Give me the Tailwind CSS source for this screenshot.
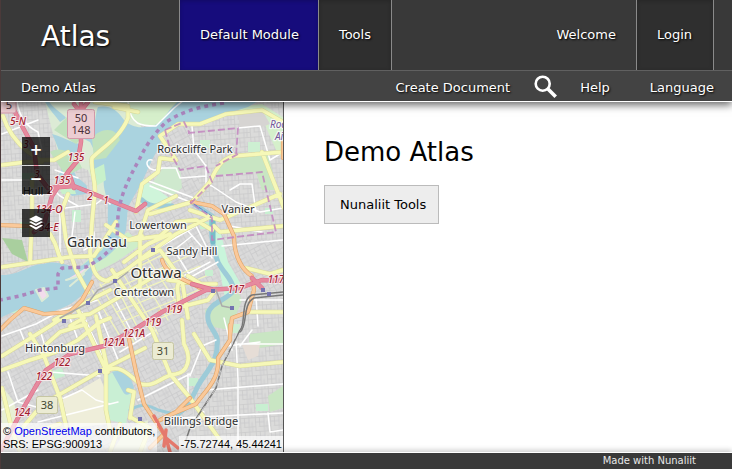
<!DOCTYPE html>
<html lang="en">
<head>
<meta charset="utf-8">
<title>Demo Atlas</title>
<script src="https://cdn.jsdelivr.net/npm/@tailwindcss/browser@4"></script>
</head>
<body class="flex h-screen flex-col overflow-hidden border-l border-[#4b3a3a] bg-white font-['DejaVu_Sans',sans-serif] text-[13px] text-black">
<header class="relative z-10 shrink-0 border-b border-white text-white shadow-[0_3px_8px_rgba(0,0,0,0.6)] [text-shadow:1px_1px_2px_#000]">
  <div class="flex h-[70px] items-stretch bg-[#393939]">
    <h1 class="flex w-[178px] items-center pt-1 pl-10 text-[28px]">Atlas</h1>
    <nav class="flex" aria-label="Modules">
      <a href="#" class="flex items-center border-l border-[#8a8a8a] bg-[#160c7c] pr-[19px] pl-5 inset-shadow-[0_1px_4px_rgba(0,0,0,0.2)]">Default Module</a>
      <a href="#" class="flex items-center border-x border-[#8a8a8a] bg-[#2f2f2f] px-5 inset-shadow-[0_1px_4px_rgba(0,0,0,0.2)]">Tools</a>
    </nav>
    <div class="ml-auto mr-[18px] flex">
      <span class="flex items-center px-5">Welcome</span>
      <a href="#" class="flex items-center border-x border-[#8a8a8a] bg-[#2f2f2f] pr-[21px] pl-5 inset-shadow-[0_1px_4px_rgba(0,0,0,0.2)]">Login</a>
    </div>
  </div>
  <div class="flex h-[31px] items-center border-t border-[#606060] bg-[#434343] pt-1 pr-[18px] pl-5">
    <a href="#">Demo Atlas</a>
    <a href="#" class="ml-auto">Create Document</a>
    <button type="button" aria-label="Search" class="-mt-[3px] ml-6">
      <svg class="block size-6" viewBox="0 0 24 24" fill="none" stroke="#fff"><circle cx="8.700" cy="8.700" r="7" stroke-width="2.600"/><path d="M13.700 13.700L21.700 21.700" stroke-width="3.600"/></svg>
    </button>
    <a href="#" class="ml-[22px]">Help</a>
    <a href="#" class="ml-10">Language</a>
  </div>
</header>
<main class="flex min-h-0 flex-1">
  <section class="relative w-[283px] shrink-0 overflow-hidden border-r border-[#555] bg-[#dadada]" aria-label="Map">
    <svg class="block size-full" viewBox="1 102 282 350" preserveAspectRatio="xMinYMin slice" fill="none" stroke-linejoin="round" stroke-linecap="round">
      <defs>
        <pattern id="streets" width="17" height="13" patternUnits="userSpaceOnUse" patternTransform="rotate(-28)"><rect width="17" height="13" fill="#dadada"/><path d="M0 .5H17M0 4.500H11M5 9H17M.5 0V13M5.500 0V9M11 0V13M14 4V13" stroke="#cacacc" stroke-width=".8"/></pattern>
        <pattern id="blocks" width="15" height="14" patternUnits="userSpaceOnUse" patternTransform="rotate(-4)"><rect width="15" height="14" fill="#dbdbda"/><path d="M0 .5H15M0 5H9M4 9.500H15M.5 0V14M4.500 0V9M9 0V14M12 5V14" stroke="#cacacc" stroke-width=".8"/></pattern>
      </defs>
      <rect x="0" y="100" width="290" height="360" fill="url(#streets)"/>
      <path d="M0 100H130V240L0 270ZM200 290H290V460H190Z" fill="url(#blocks)"/>
      <path d="M190 100H290V240H225L200 190Z" fill="url(#blocks)"/>

      <g fill="#c9e6c3">
        <path d="M45 102H128L142 128 120 190 100 200 88 170 60 160 52 130Z" fill="#dcebd5"/>
        <path d="M125 100H180L172 116 160 127 140 125 130 118Z" fill="#d6efcb"/>
        <path d="M232 108L262 104 284 118V160L276 150 262 118Z" fill="#d5efcb"/>
        <path d="M220 160L268 154 277 190 262 190 256 172 216 175Z"/>
        <path d="M163 168L180 166 182 188 172 196 150 186Z" fill="#cfe9ce"/>
        <path d="M142 178L172 200 168 212 138 204Z" fill="#cff5da"/>
        <path d="M212 235L220 230 228 262 242 286 225 298 218 262Z" fill="#c9f5db"/>
        <path d="M205 310L236 288 242 300 230 330 208 326Z"/>
        <path d="M100 248L128 232 142 244 116 262 96 272 62 284Z" fill="#cfeec9"/>
        <path d="M2 238L22 240 28 262 12 254Z" fill="#a9cf9e"/>
        <path d="M62 400L100 378 110 400 108 424 70 428Z" fill="#efeeda"/>
        <path d="M104 378L118 368 132 392 126 424 108 420Z" fill="#c9efd4"/>
        <path d="M250 334L283 330V344L248 350ZM268 396L283 386V408L270 412Z"/>
        <path d="M2 386L14 402 20 432 2 432ZM126 430L148 420 146 452 112 452Z" fill="#e8efd4"/>
        <path d="M22 173h16v7h-16zM72 210h9v12h-9zM20 222h12v7h-12zM200 222h12v7h-12zM265 208h8v6h-8zM205 270h8v6h-8zM50 372l12-4 3 8-13 4zM256 404h12v7h-12zM188 378h10v8h-10zM4 305h14v8h-14z" fill="#c8efd1"/>
        <path d="M200 140h10v8h-10zM248 142h12v10h-12zM232 324h8v9h-8z" fill="#cdefd2"/>
      </g>
      <path d="M238 114L262 110 270 124 262 127 240 128Z" fill="#d6d4d2"/>
      <path d="M242 345L260 344 258 356 248 360Z" fill="#e6ddd6"/>

      <g fill="#aad3df">
        <path d="M98 107C108 105 116 108 124 120C130 126 138 128 144 127C164 128 165 110 180 100H260L248 107 212 118C200 124 184 124 176 124C164 130 162 138 160 145L152 160 142 182 128 207 126 230C122 244 110 257 94 264L92 276 88 288C78 300 70 306 54 311C40 316 32 311 24 307L0 318V275C20 276 28 264 44 264C60 258 74 272 84 264L102 250C110 240 107 222 108 208C108 196 102 190 104 176L94 178C88 170 88 162 96 154L90 142 82 138C98 130 94 116 98 107Z"/>
        <path d="M48 100C54 110 64 114 66 118L60 122C54 114 48 108 44 100Z"/>
        <path d="M52 134C66 138 74 144 82 144L78 170 66 176C62 160 58 146 52 134ZM68 158L76 176C84 184 90 184 86 194L72 196 56 180Z"/>
        <path d="M112 372C124 368 132 378 134 388C130 395 126 398 122 390Z"/>
      </g>
      <path d="M54 130L76 108 94 116 82 138 76 144ZM50 152C62 144 78 156 82 168L66 176ZM92 138C100 128 116 126 120 140L106 158 94 160Z" fill="#c1e2bd"/>
      <path d="M92 170L104 164 106 180 96 186ZM58 185L72 180 76 194 62 194Z" fill="#c8f1cb"/>
      <path d="M66 280L80 276 92 264M70 286L84 274M36 290L44 288 48 296 42 301Z" stroke="#dcebd7" stroke-width="2" fill="#f2dcec"/>
      <g stroke="#9dcbd8" stroke-width="5">
        <path d="M142 200C150 208 160 206 172 206M194 204L212 216C210 232 212 246 218 262C224 274 232 278 234 290C228 300 210 302 208 314C206 328 220 332 217 345C218 364 200 378 196 390C188 406 184 410 178 414"/>
        <path d="M130 410C142 402 150 406 158 410L174 414L168 418" stroke-width="3"/>
        <path d="M213 218V242" stroke="#77bcc8"/>
      </g>

      <g stroke="#fff" stroke-width="1.500">
        <path d="M17 102C20 118 26 126 38 132L42 150M2 134L38 120M2 180H44L60 196 78 206M65 208L96 204 104 198 110 204M60 210V252M75 212L70 252M84 250L94 244V232M55 170L78 178"/>
        <path d="M128 102C130 126 142 126 156 126L174 108L184 100M192 126L194 150 206 166 206 184 212 186 236 202 260 212 283 208M238 128L260 126 270 160 283 152M230 190L240 184 252 184 256 212M152 160C142 158 148 176 162 168L176 168 180 178 206 176M146 180L194 198M150 186L190 202M222 246L283 240M230 226L262 232"/>
        <path d="M180 222L210 256M158 248L196 226 212 258M192 236L174 250 194 282M210 262L176 280M218 262L182 282"/>
        <path d="M2 336L36 324 62 310 98 300M8 372L18 402 40 408M50 372L100 376M20 330L28 350M70 318L78 340M98 310L118 360M82 312L104 360M116 302L136 340M2 410L38 390M38 422L118 402M54 400L64 398 82 390 96 400 110 404M40 330L48 356"/>
        <path d="M120 352L156 330M138 400L190 374M190 376L202 346 216 340M188 374V400L204 412M206 390L283 384M178 418L283 413M238 344L283 344M236 342L238 380 238 450M268 413L270 432 283 430M252 330L240 346M224 318L232 350M240 300H283M256 298L258 326M226 346L260 342"/>
      </g>
      <g stroke="#f3f6bb" stroke-width="1.300">
        <path d="M100 286L176 248M104 294L188 256M110 302L200 266M116 312L206 276M122 322L208 286M128 332L208 298M92 290L126 346M100 284L134 342M112 278L144 340M122 272L158 334M134 264L168 320M146 256L180 308"/>
      </g>

      <g stroke="#d9d99a" stroke-width="4.500">
        <path id="y1" d="M3 116C8 132 16 142 28 152L40 160H54L68 152M2 165L26 162 42 162M32 178V220L30 262M50 234C60 250 56 252 62 262M95 102L128 106V118C120 138 104 146 92 158C90 172 98 184 94 200L92 222 90 252C92 270 96 280 108 281M68 194L62 210 66 240 76 270 88 292M2 267L70 257 94 256 116 222M106 225L128 240 142 236M138 112L114 107"/>
        <path id="y2" d="M140 235L148 210 160 204 176 196M150 214L192 202 210 182C218 164 224 158 234 156L283 152M160 136L178 124 200 124 226 114 262 110 283 122M160 136L176 160 160 158 158 172 142 184 136 212M262 152L284 208M280 194L220 220 190 210M214 226L220 232 283 226M106 281L126 270 150 252 176 234 208 218M130 240L160 236 176 222 196 220 212 230M140 260L160 250 182 280 188 318M112 270L132 300 152 330 170 374 190 398 220 440M124 262L148 244 170 234M168 280L202 284 216 284M188 276L214 292 208 300 160 312M182 276C172 290 182 296 178 308M246 268L270 274 283 270M248 312H283M194 334L210 360 240 366 283 362M140 384C156 388 160 376 176 374 188 372 192 358 184 344L182 320M140 240V290"/>
        <path id="y3" d="M2 370L30 360 56 352 78 340 100 322 110 318M2 356L50 326 62 318 90 314 138 286 168 268M2 388L12 430 20 452M30 334L44 356 60 398 66 426M50 400L102 370 145 348M78 310L106 370 106 410 110 430M104 372C120 362 130 376 140 384M128 390L134 392 130 418M96 316L108 372M54 320L90 300 110 290M40 350L60 332 86 324M24 426L36 412M132 418L150 428 140 452M120 424L110 452M26 434L60 424M84 318L70 326"/>
      </g>
      <g stroke="#f6f8b8" stroke-width="3.600"><use href="#y1"/><use href="#y2"/><use href="#y3"/></g>

      <g stroke="#e0a366" stroke-width="4.200"><path id="o1" d="M0 225L28 226 46 226M0 330L10 320 24 308 44 314 70 312 82 300 92 282M192 202L212 206 224 214 234 236C234 256 242 270 252 276L254 290 248 312 232 318 230 336M230 325V340L218 358C220 380 204 392 196 404L172 414M190 398L176 412 160 420M128 334L136 372 144 404 164 434 150 448M162 260C166 276 188 280 200 288M283 140V158"/></g>
      <g stroke="#fac99a" stroke-width="3"><use href="#o1"/></g>
      <g stroke="#dc6f8a" stroke-width="4.500"><path id="r1" d="M10 102L22 126 34 148 37 174 48 188 74 186 94 194 136 211 145 204M81 100V142L78 160 68 172 52 196 44 224 34 232M70 176L74 188M0 452L20 414 36 386 46 370 70 354 104 346 134 330 162 312 186 300 206 290 240 288 262 280 284 281M192 284L214 290M252 278L262 288M74 104L80 112 88 102"/></g>
      <g stroke="#e68a9e" stroke-width="3.300"><use href="#r1"/></g>
      <path d="M154 416L166 438 178 448M166 430L164 446M166 438L170 452" stroke="#e5786c" stroke-width="3.500"/>
      <g stroke="#777" stroke-width="1.500">
        <path d="M283 292L252 295C240 300 246 326 240 330L222 366 216 388 190 428 186 440"/>
        <path d="M283 295L254 298C242 304 248 326 240 332"/>
        <path d="M88 303L98 290 112 284 128 272M60 318L88 303M216 290L222 306 232 308" stroke="#aaa"/>
      </g>
      <path d="M241 325L222 366 216 388 196 420" stroke="#ddd" stroke-width=".8" stroke-dasharray="5 5"/>

      <path d="M224 103C196 107 180 113 166 122C150 138 144 150 140 158C128 180 120 196 118 216L117 240C110 252 98 261 86 267L62 268 58 274V288L40 290 20 296 0 300" stroke="#aa85bd" stroke-width="3.500" stroke-dasharray="4 4" stroke-linecap="butt"/>
      <g stroke="#c07fbd" stroke-width="1.800" stroke-dasharray="7 3" stroke-linecap="butt" opacity=".8">
        <path d="M188 133L238 128 236 156M165 130L184 122 190 134M165 130L172 156 180 170 206 166 212 182 190 204M216 176L262 172 276 232 212 240V218L190 202M238 154L216 166"/>
      </g>
      <path d="M108 236L128 248M194 204L212 216" stroke="#5a85d0" stroke-dasharray="4 2"/>
      <g fill="#7473b0"><path d="M151 248h4v4h-4zM113 279h4v4h-4zM86 301h4v4h-4zM62 319h4v4h-4zM211 289h4v4h-4zM261 288h4v4h-4zM267 292h4v4h-4zM230 306h4v4h-4zM98 369h4v4h-4zM138 417h4v4h-4z"/></g>

      <g stroke="#d49aaa"><rect x="67.500" y="109.500" width="27" height="29" rx="2" fill="#eccdd2"/><rect x="-4" y="97" width="20" height="16" rx="2" fill="#eccdd2"/></g>
      <g fill="#ebebd3" stroke="#c6c6a3"><rect x="152.500" y="342.500" width="21" height="17" rx="2"/><rect x="36.500" y="396.500" width="21" height="17" rx="2"/></g>
      <g font-family="'Noto Sans',sans-serif" font-size="11" text-anchor="middle" fill="#4a3038"><text x="81" y="122">50</text><text x="81" y="134">148</text><text x="9" y="109">5</text><g fill="#444832"><text x="163" y="355">31</text><text x="47" y="409">38</text></g></g>

      <g font-family="'Noto Sans',sans-serif" font-size="10" font-style="italic" font-weight="500" text-anchor="middle" fill="#a21d30" stroke="#f7e9eb" stroke-width="2" paint-order="stroke">
        <text x="18" y="125">5-N</text><text x="26" y="148">3</text><text x="37" y="178">3</text><text x="76" y="161">135</text><text x="62" y="184">135</text><text x="90" y="200">2</text><text x="106" y="204">1</text><text x="50" y="194">2</text><text x="49" y="213">134-O</text><text x="46" y="231">134-E</text><text x="236" y="293">117</text><text x="276" y="283">117</text><text x="174" y="313">119</text><text x="153" y="326">119</text><text x="134" y="337">121A</text><text x="114" y="346">121A</text><text x="62" y="366">122</text><text x="44" y="380">122</text><text x="22" y="416">124</text>
      </g>
      <g font-family="'Noto Sans',sans-serif" font-size="11" text-anchor="middle" fill="#2f2f2f" stroke="#fff" stroke-opacity=".75" stroke-width="2.500" paint-order="stroke">
        <text x="195" y="153">Rockcliffe Park</text><text x="238" y="213">Vanier</text><text x="158" y="229">Lowertown</text><text x="192" y="255">Sandy Hill</text><text x="144" y="296">Centretown</text><text x="55" y="352">Hintonburg</text><text x="201" y="425">Billings Bridge</text><text x="33" y="195">Hull</text>
        <text x="97" y="247" font-size="14">Gatineau</text><text x="156" y="278" font-size="15">Ottawa</text>
        <g fill="#75559a" font-style="italic" font-size="10" text-anchor="start"><text x="270" y="128">Rockcliffe</text><text x="275" y="140">Airport</text></g>
      </g>
    </svg>
    <div class="absolute top-[35px] left-[21px] flex flex-col text-[15px] leading-none font-bold text-white">
      <button type="button" aria-label="Zoom in" class="size-7 bg-black/75 pb-[2px]">+</button>
      <button type="button" aria-label="Zoom out" class="mt-px size-7 bg-black/75 pb-[2px]">−</button>
      <button type="button" aria-label="Layers" class="mt-[15px] flex size-7 items-center justify-center bg-black/75">
        <svg class="size-4" viewBox="0 0 16 16" fill="#fff"><path d="M8 .5L15 4 8 7.500 1 4ZM1 7L3 6.200 8 8.700 13 6.200 15 7 8 11ZM1 10.600L3 9.700 8 12.300 13 9.700 15 10.600 8 14.800Z"/></svg>
      </button>
    </div>
    <div class="absolute inset-x-0 bottom-0 flex items-end justify-between font-['Liberation_Sans',sans-serif] text-[11px] leading-[13px]">
      <p class="bg-white/70 px-[2px] pt-[2px] pb-px">© <a href="#" class="text-[#0000ee]">OpenStreetMap</a> contributors,<br>SRS: EPSG:900913</p>
      <p class="bg-white/70 px-px pt-[2px] pb-px">-75.72744, 45.44241</p>
    </div>
  </section>
  <section class="min-w-0 flex-1 px-10 pt-[34px]">
    <h2 class="text-[26px] leading-8">Demo Atlas</h2>
    <a href="#" class="mt-[17px] inline-block border border-[#bbb] bg-[#ededed] pr-3 pl-[15px] leading-[37px]">Nunaliit Tools</a>
  </section>
</main>
<footer class="z-10 flex h-[17px] shrink-0 items-center justify-end border-t border-white bg-[#393939] pr-9 text-[10px] leading-4 text-[#e8e8e8] shadow-[0_-2px_5px_rgba(0,0,0,0.2)]">Made with Nunaliit</footer>
</body>
</html>
